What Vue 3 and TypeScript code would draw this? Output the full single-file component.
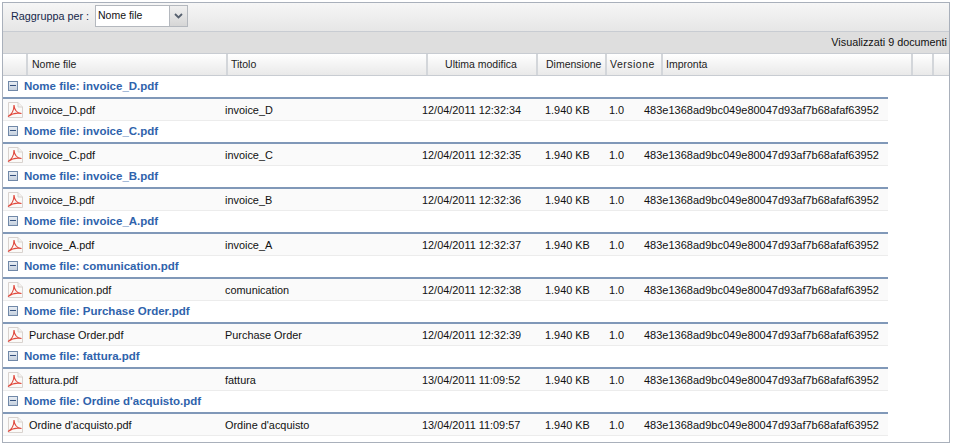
<script setup lang="ts">
interface Doc { name: string; title: string; date: string }
const docs: Doc[] = [
  { name: 'invoice_D.pdf', title: 'invoice_D', date: '12/04/2011 12:32:34' },
  { name: 'invoice_C.pdf', title: 'invoice_C', date: '12/04/2011 12:32:35' },
  { name: 'invoice_B.pdf', title: 'invoice_B', date: '12/04/2011 12:32:36' },
  { name: 'invoice_A.pdf', title: 'invoice_A', date: '12/04/2011 12:32:37' },
  { name: 'comunication.pdf', title: 'comunication', date: '12/04/2011 12:32:38' },
  { name: 'Purchase Order.pdf', title: 'Purchase Order', date: '12/04/2011 12:32:39' },
  { name: 'fattura.pdf', title: 'fattura', date: '13/04/2011 11:09:52' },
  { name: "Ordine d'acquisto.pdf", title: "Ordine d'acquisto", date: '13/04/2011 11:09:57' },
]
const hash = '483e1368ad9bc049e80047d93af7b68afaf63952'
const columns = ['', 'Nome file', 'Titolo', 'Ultima modifica', 'Dimensione', 'Versione', 'Impronta', '', '']
</script>

<template>
  <div class="page">
    <div class="panel">
      <div class="toolbar">
        <span class="label">Raggruppa per :</span>
        <div class="combo">
          <span class="combo-value">Nome file</span>
          <span class="combo-btn">
            <svg width="9" height="6" viewBox="0 0 9 6"><path d="M1 1 L4.5 4.5 L8 1" fill="none" stroke="#56606e" stroke-width="1.8" /></svg>
          </span>
        </div>
      </div>
      <div class="status">Visualizzati 9 documenti</div>
      <div class="header">
        <div v-for="(c, i) in columns" :key="i" class="hcell" :class="'h' + i"><span>{{ c }}</span></div>
      </div>
      <div class="body">
        <section v-for="d in docs" :key="d.name" class="group">
          <div class="group-head">
            <span class="toggle"><i></i></span>
            <span class="group-title">Nome file: {{ d.name }}</span>
          </div>
          <div class="row">
            <span class="icon">
              <svg width="16" height="16" viewBox="0 0 16 16">
                <path d="M1.5 .5 H11 L15.5 5 V15.5 H1.5 Z" fill="#fbfaf8" stroke="#d8d2ce" />
                <path d="M11 .5 V5 H15.5" fill="#f3f1ef" stroke="#d8d2ce" />
                <path d="M1 14.5 C4.5 12.5 7 8.5 7 3 C7.3 7.5 10 11 14.5 11.5 C10 10.5 5 11.5 1 14.5 Z" fill="none" stroke="#e04a3e" stroke-width="1.1" />
              </svg>
            </span>
            <span class="c-name">{{ d.name }}</span>
            <span class="c-title">{{ d.title }}</span>
            <span class="c-date">{{ d.date }}</span>
            <span class="c-size">1.940 KB</span>
            <span class="c-ver">1.0</span>
            <span class="c-hash">{{ hash }}</span>
          </div>
        </section>
      </div>
    </div>
  </div>
</template>

<style>
html, body { margin: 0; background: #fff; }
</style>

<style scoped>
.page {
  width: 954px;
  height: 446px;
  box-sizing: border-box;
  padding: 2px 4px 3px 2px;
  background: #fff;
  font-family: "Liberation Sans", Arial, sans-serif;
  font-size: 10.5px;
  color: #111;
  overflow: hidden;
}
.panel {
  height: 100%;
  box-sizing: border-box;
  border: 1px solid #a9b0bb;
  display: flex;
  flex-direction: column;
  background: #fff;
}
.toolbar {
  height: 29px;
  flex: none;
  box-sizing: border-box;
  display: flex;
  align-items: center;
  padding: 0 0 2px 8px;
  background: linear-gradient(#f6f6f6, #e6e6e6);
  border-bottom: 1px solid #c8ccd2;
}
.label { color: #15274a; width: 84px; font-size: 10.8px; }
.combo {
  display: flex;
  width: 93px;
  height: 22px;
  box-sizing: border-box;
  border: 1px solid #b4b8be;
  background: #fff;
}
.combo-value { flex: 1; padding: 0 2px; line-height: 19px; }
.combo-btn {
  width: 17px;
  display: flex;
  align-items: center;
  justify-content: center;
  background: linear-gradient(#f0f0f0, #d6d6d6);
  border-left: 1px solid #b4b8be;
}
.status {
  height: 21px;
  flex: none;
  background: #dedede;
  text-align: right;
  line-height: 20px;
  padding-right: 2px;
  font-size: 10.8px;
}
.header {
  height: 23px;
  flex: none;
  box-sizing: border-box;
  display: flex;
  background: linear-gradient(#ffffff, #e9e9e9);
  border-top: 1px solid #c8ccd2;
  border-bottom: 1px solid #c8ccd2;
}
.hcell {
  box-sizing: border-box;
  border-right: 2px solid #d3d6da;
  line-height: 20px;
  color: #222;
  white-space: nowrap;
}
.h0 { width: 25px; }
.h1 { width: 200px; padding-left: 4px; }
.h2 { width: 200px; padding-left: 3px; }
.h3 { width: 110px; padding-right: 2px; text-align: center; }
.h4 { width: 69px; padding-left: 8px; }
.h5 { width: 56px; padding-left: 3px; letter-spacing: .5px; }
.h6 { width: 250px; padding-left: 3px; }
.h7 { width: 21px; }
.h8 { flex: 1; border-right: 0; }
.body { flex: 1; overflow: hidden; }
.group { height: 45px; }
.group-head {
  height: 23px;
  box-sizing: border-box;
  display: flex;
  align-items: center;
  gap: 6px;
  padding: 0 0 2px 5px;
  border-bottom: 2px solid #8098b8;
  width: 885px;
}
.toggle {
  width: 10px;
  height: 10px;
  box-sizing: border-box;
  border: 1px solid #7088a8;
  background: linear-gradient(#e8edf3, #c5d0de);
  display: flex;
  align-items: center;
  justify-content: center;
}
.toggle i { width: 6px; height: 1px; background: #34507c; }
.group-title { color: #2f63ac; font-weight: 700; font-size: 11.5px; }
.row {
  width: 885px;
  height: 22px;
  box-sizing: border-box;
  display: flex;
  align-items: center;
  background: #fafafa;
  border-bottom: 1px solid #ececec;
  white-space: nowrap;
  font-size: 10.9px;
}
.icon { width: 26px; padding-left: 4px; box-sizing: border-box; display: flex; }
.c-name { width: 196px; }
.c-title { width: 197px; }
.c-date { width: 123px; }
.c-size { width: 64px; }
.c-ver { width: 35px; }
.c-hash { width: 240px; font-size: 11px; }
</style>
